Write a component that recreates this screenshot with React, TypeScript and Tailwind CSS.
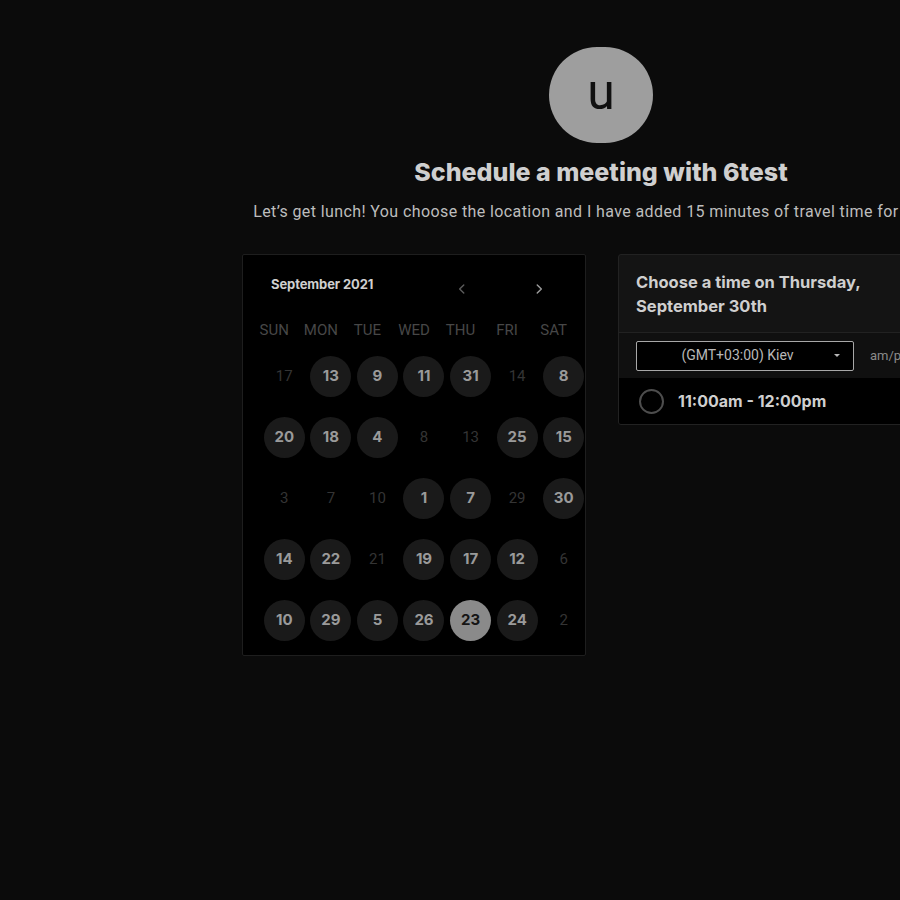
import React from "react";

const DAY_NAMES = ["SUN", "MON", "TUE", "WED", "THU", "FRI", "SAT"];

// n: number, a: available, s: selected
type Day = { n: number; a?: boolean; s?: boolean };

const WEEKS: Day[][] = [
  [{ n: 17 }, { n: 13, a: true }, { n: 9, a: true }, { n: 11, a: true }, { n: 31, a: true }, { n: 14 }, { n: 8, a: true }],
  [{ n: 20, a: true }, { n: 18, a: true }, { n: 4, a: true }, { n: 8 }, { n: 13 }, { n: 25, a: true }, { n: 15, a: true }],
  [{ n: 3 }, { n: 7 }, { n: 10 }, { n: 1, a: true }, { n: 7, a: true }, { n: 29 }, { n: 30, a: true }],
  [{ n: 14, a: true }, { n: 22, a: true }, { n: 21 }, { n: 19, a: true }, { n: 17, a: true }, { n: 12, a: true }, { n: 6 }],
  [{ n: 10, a: true }, { n: 29, a: true }, { n: 5, a: true }, { n: 26, a: true }, { n: 23, a: true, s: true }, { n: 24, a: true }, { n: 2 }],
];

const Chevron = ({ dir }: { dir: "left" | "right" }) => (
  <svg width="14" height="14" viewBox="0 0 24 24" fill="none" stroke="currentColor" strokeWidth="2.5" strokeLinecap="round" strokeLinejoin="round">
    {dir === "left" ? <path d="M15 5l-7 7 7 7" /> : <path d="M9 5l7 7-7 7" />}
  </svg>
);

const Calendar = () => {
  return (
    <div className="w-[344px] h-[402px] border border-[#1e1e1e] bg-black pt-[18px] pl-[8px] overflow-hidden rounded-[2px]">
      <div className="flex items-center h-[24px]">
        <div className="w-[196px] pl-[20px] text-[13px] font-bold text-[#cfcfcf] font-['Inter',sans-serif] tracking-[-0.1px]">
          September 2021
        </div>
        <div className="w-[30px] flex justify-center text-[#5a5a5a] mt-[8px]">
          <Chevron dir="left" />
        </div>
        <div className="w-[47px]" />
        <div className="w-[30px] flex justify-center text-[#9a9a9a] mt-[8px]">
          <Chevron dir="right" />
        </div>
      </div>
      <div className="grid grid-cols-7 w-[326px] h-[20px] mt-[22px]">
        {DAY_NAMES.map((d) => (
          <div key={d} className="flex items-center justify-center text-[15px] text-[#474747] font-['Roboto',sans-serif]">
            {d}
          </div>
        ))}
      </div>
      <div className="grid grid-cols-7 w-[326px] ml-[10px] mt-[7px]">
        {WEEKS.flat().map((d, i) => (
          <div key={i} className="h-[61px] flex items-center justify-center">
            {d.a ? (
              <div
                className={
                  d.s
                    ? "w-[41px] h-[41px] rounded-full bg-[#8a8a8a] flex items-center justify-center text-[15px] font-bold text-[#151515] font-['Inter',sans-serif]"
                    : "w-[41px] h-[41px] rounded-full bg-[#1a1a1a] flex items-center justify-center text-[15px] font-bold text-[#9a9a9a] font-['Inter',sans-serif]"
                }
              >
                {d.n}
              </div>
            ) : (
              <div className="text-[15px] text-[#343434] font-['Roboto',sans-serif]">{d.n}</div>
            )}
          </div>
        ))}
      </div>
    </div>
  );
};

const TimePanel = () => {
  return (
    <div className="w-[342px] border border-[#222] bg-[#141414] rounded-[3px] overflow-hidden">
      <div className="px-[17px] pt-[15px] pb-[14px] border-b border-[#222] text-[16.5px] leading-[24px] font-bold text-[#cfcfcf] font-['Inter',sans-serif]">
        Choose a time on Thursday,
        <br />
        September 30th
      </div>
      <div className="h-[45px] bg-[#101010] flex items-center pl-[17px]">
        <div className="w-[218px] h-[30px] border border-[#a8a8a8] rounded-[2px] bg-black flex items-center text-[14px] text-[#b8b8b8] font-['Roboto',sans-serif]">
          <div className="flex-1 text-center pl-[6px]">(GMT+03:00) Kiev</div>
          <svg width="10" height="6" viewBox="0 0 10 6" className="mr-[11px]">
            <path d="M2 1h6L5 4z" fill="#b8b8b8" />
          </svg>
        </div>
        <div className="ml-[16px] text-[13px] text-[#8a8a8a] font-['Roboto',sans-serif]">am/pm</div>
      </div>
      <div className="h-[46px] bg-black flex items-center pl-[20px]">
        <div className="w-[25px] h-[25px] rounded-full border-2 border-[#4d4d4d]" />
        <div className="ml-[14px] text-[16px] font-bold text-[#cfcfcf] font-['Inter',sans-serif]">
          11:00am - 12:00pm
        </div>
      </div>
    </div>
  );
};

export default function App() {
  return (
    <div className="w-[900px] h-[900px] overflow-hidden bg-[#0b0b0b]">
      <div className="w-[1202px] flex flex-col items-center pt-[47px]">
        <div className="w-[104px] h-[96px] rounded-full bg-[#9e9e9e] flex items-center justify-center text-[50px] leading-none text-[#111] font-['Roboto',sans-serif] pb-[6px]">
          u
        </div>
        <h1 className="mt-[14px] text-[25px] leading-[30px] font-extrabold text-[#cfcfcf] font-['Inter',sans-serif]">
          Schedule a meeting with 6test
        </h1>
        <p className="mt-[15px] pr-[18px] text-[16px] leading-[20px] text-[#bdbdbd] font-['Roboto',sans-serif] tracking-[0.4px]">
          Let’s get lunch! You choose the location and I have added 15 minutes of travel time for me.
        </p>
        <div className="flex items-start gap-[32px] mt-[32px]">
          <Calendar />
          <TimePanel />
        </div>
      </div>
    </div>
  );
}
